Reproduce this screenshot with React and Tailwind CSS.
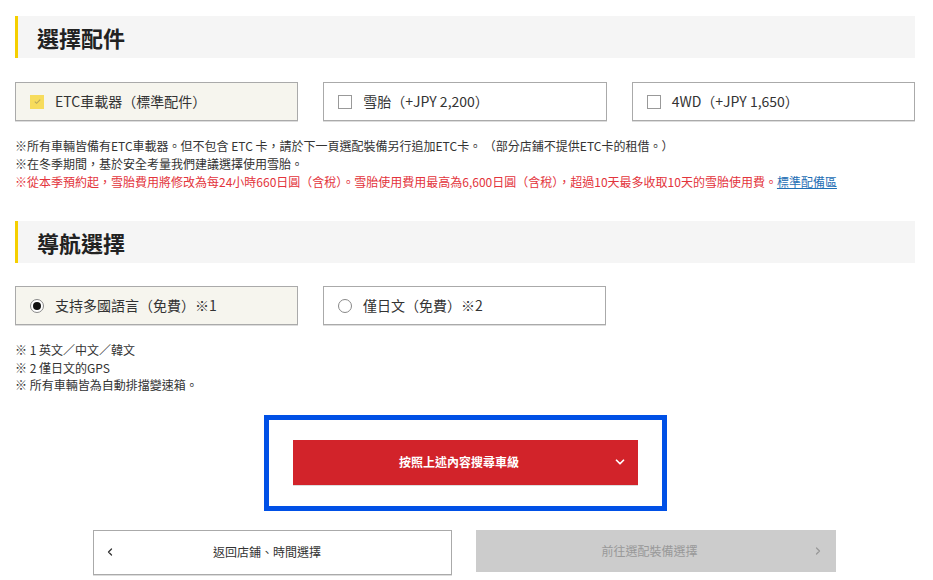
import { ChevronDown, ChevronLeft, ChevronRight } from 'lucide-react';

const font = { fontFamily: '"Noto Sans CJK TC", "Noto Sans", sans-serif' };

function SectionTitle({ children, className }) {
  return (
    <div className={`flex h-[42px] items-center border-l-[3px] border-[#f5cf00] bg-[#f5f5f5] pl-[19px] ${className}`}>
      <h2 className="text-[22px] font-bold leading-none text-[#222]">{children}</h2>
    </div>
  );
}

function OptionBox({ active, children }) {
  return (
    <div
      className={`flex h-[39px] flex-1 items-center gap-[11px] border border-[#aaa] pl-[14px] text-[14px] text-[#333] shadow-[0_1px_0_#ddd] ${
        active ? 'bg-[#f6f5ee]' : 'bg-white'
      }`}
    >
      {children}
    </div>
  );
}

function CheckBox({ checked }) {
  return checked ? (
    <span className="flex h-[14px] w-[14px] items-center justify-center bg-[#f7dc5c]">
      <svg viewBox="0 0 10 10" className="h-[9px] w-[9px]" fill="none" stroke="#b9a85a" strokeWidth="1.2">
        <path d="M2 5.2 L4 7 L8 3" />
      </svg>
    </span>
  ) : (
    <span className="h-[14px] w-[14px] border border-[#999] bg-white" />
  );
}

function Radio({ checked }) {
  return (
    <span className="flex h-[14px] w-[14px] items-center justify-center rounded-full border border-[#888] bg-white">
      {checked && <span className="h-[8px] w-[8px] rounded-full bg-[#111]" />}
    </span>
  );
}

export default function App() {
  return (
    <div className="min-h-screen bg-white pb-4 pl-[15px] pr-[18px] pt-[16px]" style={font}>
      <SectionTitle>選擇配件</SectionTitle>

      <div className="mt-[24px] flex gap-[25px]">
        <OptionBox active>
          <CheckBox checked />
          <span>ETC車載器（標準配件）</span>
        </OptionBox>
        <OptionBox>
          <CheckBox />
          <span>雪胎（+JPY 2,200）</span>
        </OptionBox>
        <OptionBox>
          <CheckBox />
          <span>4WD（+JPY 1,650）</span>
        </OptionBox>
      </div>

      <div className="mt-[16px] text-[12px] leading-[18px] text-[#333]">
        <p>※所有車輛皆備有ETC車載器。但不包含 ETC 卡，請於下一頁選配裝備另行追加ETC卡。 （部分店鋪不提供ETC卡的租借。）</p>
        <p>※在冬季期間，基於安全考量我們建議選擇使用雪胎。</p>
        <p className="text-[#e3343c]">
          ※從本季預約起，雪胎費用將修改為每24小時660日圓（含稅）。雪胎使用費用最高為6,600日圓（含稅），超過10天最多收取10天的雪胎使用費。
          <a href="#" className="text-[#1f6fb5] underline">標準配備區</a>
        </p>
      </div>

      <SectionTitle className="mt-[30px]">導航選擇</SectionTitle>

      <div className="mt-[23px] flex gap-[25px]">
        <div className="flex w-[283px] items-stretch">
          <OptionBox active>
            <Radio checked />
            <span>支持多國語言（免費）※1</span>
          </OptionBox>
        </div>
        <div className="flex w-[283px] items-stretch">
          <OptionBox>
            <Radio />
            <span>僅日文（免費）※2</span>
          </OptionBox>
        </div>
      </div>

      <div className="mt-[16px] text-[12px] leading-[17.5px] text-[#333]">
        <p>※ 1 英文／中文／韓文</p>
        <p>※ 2 僅日文的GPS</p>
        <p>※ 所有車輛皆為自動排擋變速箱。</p>
      </div>

      <div className="mt-[21px] flex justify-center">
        <div className="border-[5px] border-[#0050e6] px-[24px] pb-[21px] pt-[20px]">
          <button className="relative flex h-[45px] w-[345px] items-center justify-center bg-[#d2232a] pr-[12px] text-[12px] font-bold text-white shadow-[0_1px_0_#ddd]">
            按照上述內容搜尋車級
            <ChevronDown className="absolute right-[11px] h-[14px] w-[14px]" strokeWidth={3} />
          </button>
        </div>
      </div>

      <div className="mt-[19px] flex justify-center gap-[24px] pr-[2px]">
        <button className="relative flex h-[45px] w-[359px] items-center justify-center border border-[#aaa] bg-white pr-[10px] text-[12px] text-[#333] shadow-[0_1px_0_#ddd]">
          <ChevronLeft className="absolute left-[10px] h-[12px] w-[12px]" strokeWidth={2.5} />
          返回店鋪、時間選擇
        </button>
        <button className="relative flex h-[42px] w-[360px] items-center justify-center bg-[#cccccc] pr-[12px] text-[12px] text-[#999]">
          前往選配裝備選擇
          <ChevronRight className="absolute right-[12px] h-[12px] w-[12px]" strokeWidth={2.5} />
        </button>
      </div>
    </div>
  );
}
